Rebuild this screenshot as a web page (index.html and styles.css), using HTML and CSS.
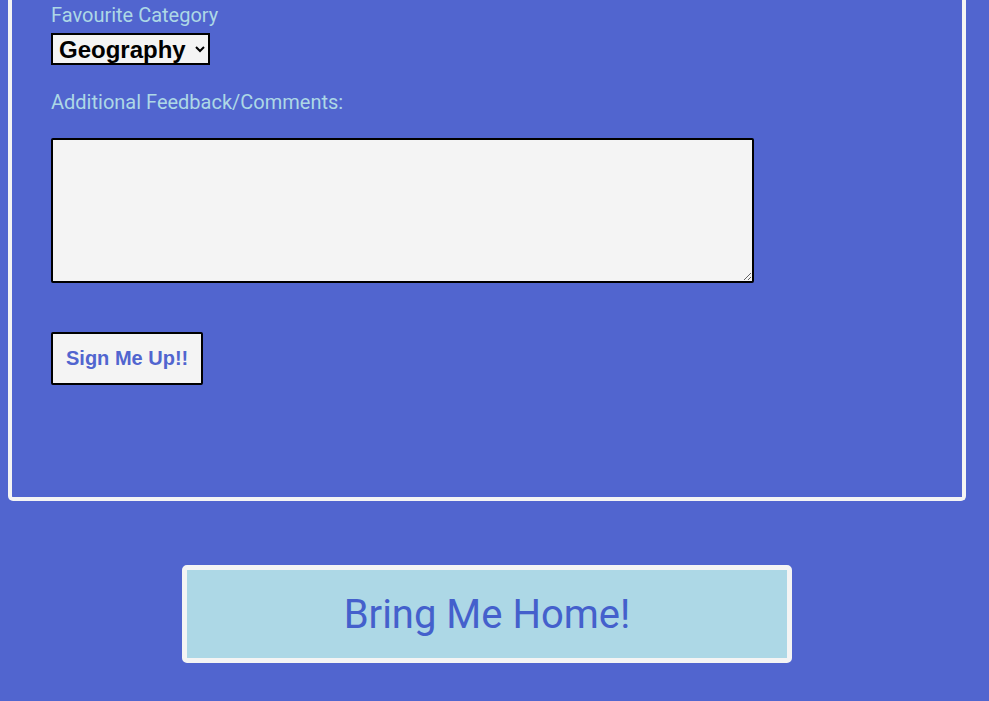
FILE: index.html
```html
<!DOCTYPE html>
<html lang="en">
<head>
<meta charset="utf-8">
<title>Sign up</title>
<link rel="stylesheet" href="styles.css">
</head>
<body>
<div class="page">
  <form class="signup-frame">
    <label class="field-label" for="category">Favourite Category</label>
    <select id="category" class="category-select">
      <option>Geography</option>
      <option>History</option>
      <option>Science</option>
    </select>
    <label class="field-label comments-label" for="comments">Additional Feedback/Comments:</label>
    <textarea id="comments" class="comments-box"></textarea>
    <button type="button" class="submit-btn">Sign Me Up!!</button>
  </form>
  <div class="home-row">
    <a class="home-btn" href="#">Bring Me Home!</a>
  </div>
</div>
</body>
</html>
```

FILE: styles.css
```css
html, body {
  background: #5165cf;
}
body {
  margin: 0 8px;
  font-family: Roboto, "Noto Sans", sans-serif;
}
.page {
  width: 958px;
  padding-bottom: 38px;
}
.signup-frame {
  box-sizing: border-box;
  width: 958px;
  border: 4px solid #f4f4f4;
  border-top: none;
  border-radius: 0 0 5px 5px;
  padding: 4px 39px 112px;
  display: flex;
  flex-direction: column;
  align-items: flex-start;
}
.field-label {
  display: block;
  color: #add8e6;
  font-size: 20px;
  line-height: 23px;
  margin-bottom: 6px;
}
.comments-label {
  margin-top: 26px;
  margin-bottom: 24px;
}
.category-select {
  box-sizing: border-box;
  height: 32px;
  font-family: "Liberation Sans", Arial, sans-serif;
  font-weight: bold;
  font-size: 24px;
  color: #000;
  background: #f4f4f4;
  border: 2px solid #000;
  border-radius: 0;
  padding: 0 6px 0 2px;
}
.comments-box {
  box-sizing: border-box;
  display: block;
  width: 703px;
  height: 145px;
  margin: 0 0 49px;
  background: #f4f4f4;
  border: 2px solid #000;
  border-radius: 2px;
}
.submit-btn {
  box-sizing: border-box;
  height: 53px;
  padding: 0 13px;
  font-family: "Liberation Sans", Arial, sans-serif;
  font-weight: bold;
  font-size: 20px;
  color: #5165cf;
  background: #f4f4f4;
  border: 2px solid #000;
  border-radius: 2px;
}
.home-row {
  display: flex;
  justify-content: center;
  margin-top: 64px;
}
.home-btn {
  box-sizing: border-box;
  width: 610px;
  height: 98px;
  display: flex;
  align-items: center;
  justify-content: center;
  background: #add8e6;
  border: 5px solid #f4f4f4;
  border-radius: 5px;
  color: #4460cc;
  font-size: 40px;
  text-decoration: none;
}
```
